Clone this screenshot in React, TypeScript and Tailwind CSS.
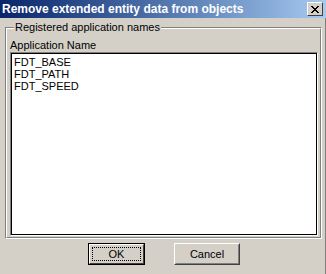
import React from 'react';

const items = ['FDT_BASE', 'FDT_PATH', 'FDT_SPEED'];

// Win9x style title-bar close glyph
const CloseGlyph = () => (
  <svg width="8" height="7" viewBox="0 0 8 7" shapeRendering="crispEdges">
    <path d="M0 0h2v1h-2zM6 0h2v1h-2zM1 1h2v1h-2zM5 1h2v1h-2zM2 2h4v1h-4zM3 3h2v1h-2zM2 4h4v1h-4zM1 5h2v1h-2zM5 5h2v1h-2zM0 6h2v1h-2zM6 6h2v1h-2z" fill="#000" />
  </svg>
);

const App = () => {
  return (
    <div className="w-[326px] h-[274px] bg-[#d4d0c8] flex flex-col overflow-hidden font-['Liberation_Sans',Arial,sans-serif] text-[11px] text-black">
      {/* title bar */}
      <div className="h-[18px] flex items-center justify-between pl-[2px] pr-[3px] bg-gradient-to-r from-[#0a246a] to-[#a6caf0]">
        <span className="font-bold text-white text-[12px] leading-none whitespace-nowrap font-['Liberation_Sans',Tahoma,sans-serif]">
          Remove extended entity data from objects
        </span>
        <button
          type="button"
          className="w-[16px] h-[14px] flex items-center justify-center bg-[#d4d0c8] border border-t-white border-l-white border-r-[#404040] border-b-[#404040]"
        >
          <CloseGlyph />
        </button>
      </div>

      <div className="flex-1 flex flex-col pl-[5px] pr-[3px] pt-[9px] border-r border-[#808080]">
        {/* group box */}
        <div className="relative h-[212px] border border-t-[#808080] border-l-[#808080] border-r-white border-b-white">
          <div className="h-full flex flex-col pl-[3px] pr-[2px] pt-[10px] pb-[1px] border border-t-white border-l-white border-r-[#808080] border-b-[#808080]">
            <div className="h-[13px] leading-[13px] whitespace-nowrap">Application Name</div>
            <div className="flex-1 border border-t-[#808080] border-l-[#808080] border-r-white border-b-white">
              <div className="h-full bg-white border border-black pl-[2px] pt-[2px]">
                {items.map((name) => (
                  <div key={name} className="h-[12px] leading-[12px] whitespace-nowrap">
                    {name}
                  </div>
                ))}
              </div>
            </div>
          </div>
          <span className="absolute left-[8px] top-[-7px] px-[1px] bg-[#d4d0c8] leading-[13px] whitespace-nowrap">
            Registered application names
          </span>
        </div>

        {/* buttons */}
        <div className="flex gap-[29px] pl-[83px] mt-[4px]">
          <button
            type="button"
            className="w-[57px] h-[22px] border border-black bg-[#d4d0c8] p-0"
          >
            <div className="w-full h-full border border-t-white border-l-white border-r-[#404040] border-b-[#404040] p-[2px]">
              <div className="w-full h-full border border-dotted border-black flex items-center justify-center leading-none">
                OK
              </div>
            </div>
          </button>
          <button
            type="button"
            className="w-[66px] h-[22px] border border-t-white border-l-white border-r-[#404040] border-b-[#404040] bg-[#d4d0c8] p-0"
          >
            <div className="w-full h-full border border-t-[#d4d0c8] border-l-[#d4d0c8] border-r-[#808080] border-b-[#808080] flex items-center justify-center leading-none">
              Cancel
            </div>
          </button>
        </div>
      </div>
    </div>
  );
};

export default App;
